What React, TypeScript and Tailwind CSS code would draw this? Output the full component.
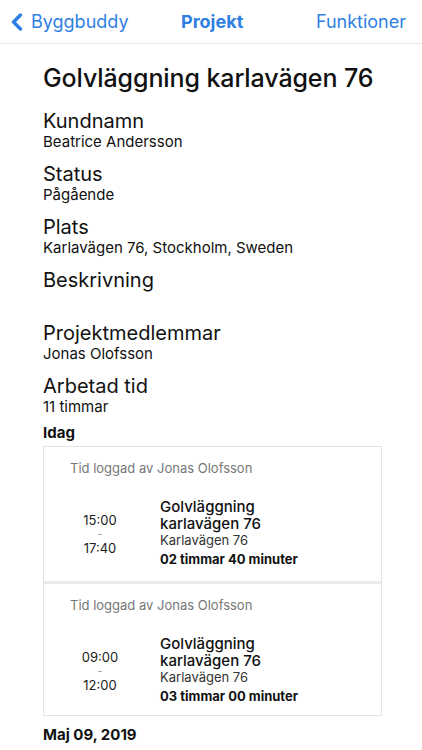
import { ChevronLeft } from "lucide-react";

const fields = [
  { label: "Kundnamn", value: "Beatrice Andersson" },
  { label: "Status", value: "Pågående" },
  { label: "Plats", value: "Karlavägen 76, Stockholm, Sweden" },
  { label: "Beskrivning", value: "" },
  { label: "Projektmedlemmar", value: "Jonas Olofsson" },
  { label: "Arbetad tid", value: "11 timmar" },
];

const logs = [
  { from: "15:00", to: "17:40", duration: "02 timmar 40 minuter" },
  { from: "09:00", to: "12:00", duration: "03 timmar 00 minuter" },
];

export default function App() {
  return (
    <div className="w-[422px] h-[750px] overflow-hidden bg-white text-[#111] font-['Inter',sans-serif]">
      {/* Nav bar */}
      <div className="h-[44px] flex items-center border-b border-[#e6e6e6] text-[#2f7fe3] text-[18px]">
        <div className="flex items-center pl-[3px] w-[160px]">
          <ChevronLeft size={28} strokeWidth={3} />
          <span>Byggbuddy</span>
        </div>
        <span className="font-bold ml-[21px]">Projekt</span>
        <span className="ml-auto pr-[16px]">Funktioner</span>
      </div>

      <div className="px-[43px]">
        <h1 className="text-[25px] leading-[30px] font-medium mt-[19px] mb-[16px] tracking-[-0.1px]">
          Golvläggning karlavägen 76
        </h1>

        {fields.map((f) => (
          <div key={f.label} className="h-[53px]">
            <div className="text-[20px] leading-[24px]">{f.label}</div>
            <div className="text-[15px] leading-[18px]">{f.value}</div>
          </div>
        ))}

        <div className="text-[15px] font-bold leading-[18px] mt-[-3px] mb-[4px]">Idag</div>

        <div className="border border-[#e4e4e4] mr-[-3px]">
          {logs.map((l, i) => (
            <div
              key={i}
              className={`h-[134px] px-[26px] pt-[13px] ${i > 0 ? "border-t-[3px] border-[#ebebeb]" : ""}`}
            >
              <div className="text-[13px] text-[#777] leading-[16px]">Tid loggad av Jonas Olofsson</div>
              <div className="flex items-center mt-[22px]">
                <div className="w-[60px] text-center text-[13px] leading-[14px] text-[#222]">
                  <div>{l.from}</div>
                  <div className="text-[10px] text-[#888]">-</div>
                  <div>{l.to}</div>
                </div>
                <div className="ml-[30px]">
                  <div className="text-[15px] font-medium leading-[17px]">
                    Golvläggning
                    <br />
                    karlavägen 76
                  </div>
                  <div className="text-[13px] leading-[16px] text-[#333]">Karlavägen 76</div>
                  <div className="text-[13px] font-bold leading-[20px] mt-[1px]">{l.duration}</div>
                </div>
              </div>
            </div>
          ))}
        </div>

        <div className="text-[15px] font-bold leading-[18px] mt-[10px]">Maj 09, 2019</div>
      </div>
    </div>
  );
}
